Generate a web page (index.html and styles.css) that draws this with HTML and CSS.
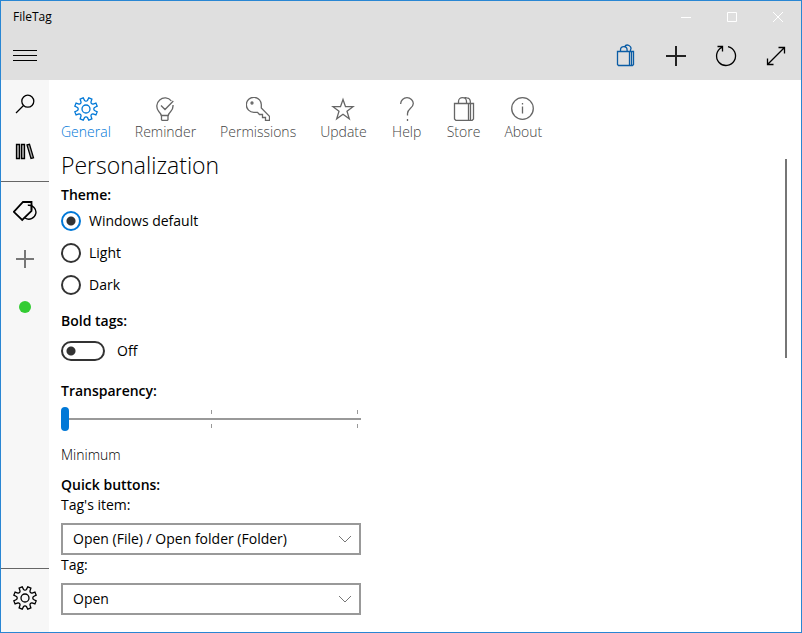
FILE: index.html
```html
<!DOCTYPE html>
<html lang="en">
<head>
<meta charset="utf-8">
<title>FileTag</title>
<link rel="stylesheet" href="styles.css">
</head>
<body>
<svg class="symbols" aria-hidden="true">
  <symbol id="gear" viewBox="0 0 24 24">
    <path d="M13.5 3.4 14.8.8 17.9 2.1 17 4.9A1.8 1.8 0 0 0 19.1 7L21.9 6.1 23.2 9.2 20.6 10.5A1.8 1.8 0 0 0 20.6 13.5L23.2 14.8 21.9 17.9 19.1 17A1.8 1.8 0 0 0 17 19.1L17.9 21.9 14.8 23.2 13.5 20.6A1.8 1.8 0 0 0 10.5 20.6L9.2 23.2 6.1 21.9 7 19.1A1.8 1.8 0 0 0 4.9 17L2.1 17.9.8 14.8 3.4 13.5A1.8 1.8 0 0 0 3.4 10.5L.8 9.2 2.1 6.1 4.9 7A1.8 1.8 0 0 0 7 4.9L6.1 2.1 9.2.8 10.5 3.4A1.8 1.8 0 0 0 13.5 3.4Z"/>
    <circle cx="12" cy="12" r="4"/>
  </symbol>
  <symbol id="bag" viewBox="0 0 24 24">
    <path d="M2.500 6.500H21.500V22L20 23.500H4L2.500 22ZM16.500 6.500V23.500M18.500 6.500V23M6.500 6.500V4.500A4 3.800 0 0 1 14.500 4.500V6.500M12 1A3 3 0 0 1 14.500 .8A4 3.800 0 0 1 18.300 4.500V6.500"/>
  </symbol>
</svg>
<div class="window">
  <header class="header">
    <div class="titlebar">
      <span class="title">FileTag</span>
      <div class="caption">
        <button type="button" aria-label="Minimize"><svg viewBox="0 0 12 12"><path d="M1 6.5H11"/></svg></button>
        <button type="button" aria-label="Maximize"><svg viewBox="0 0 12 12"><path d="M1.500 1.500H10.500V10.500H1.500Z"/></svg></button>
        <button type="button" aria-label="Close"><svg viewBox="0 0 12 12"><path d="M1 1 11 11M11 1 1 11"/></svg></button>
      </div>
    </div>
    <div class="toolbar">
      <button class="menu" type="button" aria-label="Menu"><svg viewBox="0 0 24 24"><path d="M0 6.500H24M0 11.500H24M0 16.500H24"/></svg></button>
      <div class="actions">
        <button class="store" type="button" aria-label="Store"><svg viewBox="0 0 24 24"><path d="M3.500 7.500H19.500V20.500L18.500 21.500H4.500L3.500 20.500ZM15.500 7.500V21.500M17.500 7.500V21M6.500 7.500V6A3.300 3.300 0 0 1 13.100 6V7.500M10.500 3A3.300 3.300 0 0 1 16.500 6V7.500"/></svg></button>
        <button class="strong" type="button" aria-label="Add"><svg viewBox="0 0 24 24"><path d="M2 12H22M12 2V22"/></svg></button>
        <button type="button" aria-label="Refresh"><svg viewBox="0 0 24 24"><path d="M14 2.700A9.500 9.500 0 1 1 8 3.400M3.500 2.500H8.500V7.500"/></svg></button>
        <button type="button" aria-label="Expand"><svg viewBox="0 0 24 24"><path d="M3.500 20.500 20.500 3.500M14.500 3.500H20.500V9.500M3.500 14.500V20.500H9.500"/></svg></button>
      </div>
    </div>
  </header>
  <div class="body">
    <nav class="rail">
      <div class="rail-group">
        <button type="button" aria-label="Search"><svg viewBox="0 0 24 24"><circle cx="14.800" cy="9.200" r="6"/><path d="M10.500 13.500 3 21"/></svg></button>
        <button type="button" aria-label="Library"><svg class="books" viewBox="0 0 24 24"><path d="M3.500 4.500H6.500V18.500H3.500ZM8.500 4.500H11.500V18.500H8.500ZM14 5 16.500 4.300 20.500 17.800 18 18.500Z"/></svg></button>
      </div>
      <div class="rail-group tags">
        <button type="button" aria-label="Tags"><svg class="tag-icon" viewBox="0 0 24 24"><path d="M.8 12.800 10 3H18.500V11.800L9.200 21Z"/><path class="thin" d="M14.800 6.300A7 7 0 1 1 12 19M18.500 5.500V11"/></svg></button>
        <button class="faint" type="button" aria-label="Add tag"><svg viewBox="0 0 24 24"><path d="M3 12H21M12 3V21"/></svg></button>
        <button type="button" aria-label="Green tag"><span class="dot"></span></button>
      </div>
      <div class="rail-group bottom">
        <button type="button" aria-label="Settings"><svg viewBox="0 0 24 24"><use href="#gear"/></svg></button>
      </div>
    </nav>
    <main class="main">
      <nav class="tabs">
        <a class="active" href="#general"><svg viewBox="0 0 24 24"><use href="#gear"/></svg>General</a>
        <a href="#reminder"><svg viewBox="0 0 24 24"><path d="M18.300 3.800A8.200 8.200 0 1 0 5.800 14.500C7.800 16.500 8.500 17.500 8.500 19.500V22.800L9.300 23.500H14.200L15 22.800V19.500C15 17.500 15.700 16.500 17.700 14.500A8.200 8.200 0 0 0 20 8M8.500 18.500H15M8 8.500 12 12.500 20.300 4"/></svg>Reminder</a>
        <a href="#permissions"><svg viewBox="0 0 24 24"><circle cx="6" cy="6" r="1"/><path d="M8 15.300A7.500 7.500 0 1 1 15.300 8.500V11L23.500 19.300V23.500H19.500V20.500H16.500V17.500H13.500L11.500 15.300Z"/></svg>Permissions</a>
        <a href="#update"><svg viewBox="0 0 24 24"><path d="M12 2.500 14.500 9.700H22L16 14.200 18.300 21.800 12 17.300 5.700 21.800 8 14.200 2 9.700H9.500Z"/></svg>Update</a>
        <a href="#help"><svg viewBox="0 0 24 24"><path d="M5.700 7V6.500A6.300 5.800 0 0 1 18.300 6.500C18.300 11 12.500 11.500 12.500 16.500V18.500M12.500 22V24"/></svg>Help</a>
        <a href="#store"><svg viewBox="0 0 24 24"><use href="#bag"/></svg>Store</a>
        <a href="#about"><svg viewBox="0 0 24 24"><circle cx="11.500" cy="11.500" r="10.800"/><path d="M11.500 9.500V16.500M11.500 6V7.500"/></svg>About</a>
      </nav>
      <div class="pane">
        <form class="settings">
          <h1>Personalization</h1>
          <fieldset>
            <legend>Theme:</legend>
            <label class="radio"><input type="radio" name="theme" checked>Windows default</label>
            <label class="radio"><input type="radio" name="theme">Light</label>
            <label class="radio"><input type="radio" name="theme">Dark</label>
          </fieldset>
          <h2 id="bold">Bold tags:</h2>
          <label class="toggle"><input type="checkbox" role="switch" aria-describedby="bold">Off</label>
          <label class="heading" for="transparency">Transparency:</label>
          <input class="slider" id="transparency" type="range" min="0" max="2" value="0">
          <output class="value" for="transparency">Minimum</output>
          <h2 class="quick">Quick buttons:</h2>
          <label for="item">Tag's item:</label>
          <div class="select"><select id="item"><option>Open (File) / Open folder (Folder)</option></select><svg viewBox="0 0 14 8"><path d="M1 1 7 7 13 1"/></svg></div>
          <label for="tag">Tag:</label>
          <div class="select"><select id="tag"><option>Open</option></select><svg viewBox="0 0 14 8"><path d="M1 1 7 7 13 1"/></svg></div>
        </form>
        <div class="scroll-track"><div class="scroll-thumb"></div></div>
      </div>
    </main>
  </div>
</div>
</body>
</html>
```
FILE: styles.css
```css
* { box-sizing: border-box; }

body {
  margin: 0;
  font: 14px/20px "Open Sans", "Noto Sans", sans-serif;
  color: #000;
  background: #fff;
}

button {
  display: flex;
  align-items: center;
  justify-content: center;
  padding: 0;
  border: 0;
  background: none;
  color: inherit;
}

svg {
  display: block;
  width: 24px;
  height: 24px;
  fill: none;
  stroke: currentColor;
  stroke-width: 1.3;
}

.symbols { display: none; }

.window {
  display: flex;
  flex-direction: column;
  min-height: 100vh;
  border: 1px solid #2986d3;
}

.header { background: #dfdfdf; }

.titlebar {
  display: flex;
  justify-content: space-between;
  height: 31px;
  padding-left: 12px;
}

.title { font-size: 12px; line-height: 32px; }

.caption { display: flex; color: #fff; }
.caption button { width: 46px; }
.caption svg { width: 12px; height: 12px; stroke-width: 1; }

.toolbar { display: flex; justify-content: space-between; height: 48px; }
.menu { width: 48px; }
.menu svg { stroke-width: 1; }
.actions { display: flex; }
.actions button { width: 50px; }
.actions .store { color: #0a5ca5; }
.actions .strong { color: #222; }
.strong svg { stroke-width: 2; }

.body { display: flex; flex: 1; }

.rail {
  display: flex;
  flex-direction: column;
  flex: none;
  width: 48px;
  background: #f7f7f7;
}
.rail button { width: 48px; height: 48px; }
.rail-group { padding-bottom: 5px; }
.tags { padding-top: 5px; border-top: 1px solid #666; }
.bottom { margin-top: auto; padding: 5px 0 10px; border-top: 1px solid #666; }
.books { fill: #aaa; }
.tag-icon { stroke-width: 1.8; }
.tag-icon .thin { stroke-width: 1.4; }
.faint { color: #777; }
.faint svg { stroke-width: 2; }
.dot { width: 12px; height: 12px; border-radius: 50%; background: #3c3; }

.main { display: flex; flex-direction: column; flex: 1; min-width: 0; }

.tabs { display: flex; gap: 24px; padding: 17px 12px 0; }
.tabs a {
  display: flex;
  flex-direction: column;
  align-items: center;
  min-width: 32px;
  font-weight: 300;
  color: #444;
  text-decoration: none;
}
.tabs svg { margin-bottom: 1px; color: #666; }
.tabs .active, .tabs .active svg { color: #0078d7; }

.pane { display: flex; flex: 1; }

.settings {
  display: flex;
  flex-direction: column;
  flex: 1;
  align-items: flex-start;
  padding: 8px 12px 17px;
}

h1 { margin: 0; font-size: 23px; line-height: 30px; font-weight: 300; }

fieldset { margin: 0; padding: 0; border: 0; }
legend, h2, .heading {
  margin: 0;
  padding: 0;
  font-size: 14px;
  line-height: 20px;
  font-weight: 600;
}
legend { padding-top: 5px; }

.radio { display: flex; align-items: center; gap: 8px; height: 32px; }
.radio input {
  appearance: none;
  width: 20px;
  height: 20px;
  margin: 0;
  border: 2px solid #333;
  border-radius: 50%;
}
.radio input:checked {
  border-color: #0078d7;
  background: radial-gradient(circle, #333 4px, transparent 5px);
}

fieldset + h2 { margin-top: 10px; }

.toggle { display: flex; align-items: center; gap: 12px; height: 40px; }
.toggle input {
  appearance: none;
  width: 44px;
  height: 20px;
  margin: 0;
  border: 2px solid #333;
  border-radius: 10px;
  background: radial-gradient(circle at 8px 8px, #333 4px, transparent 5px);
}

.heading { margin-top: 10px; }

.slider {
  appearance: none;
  width: 300px;
  max-width: 100%;
  height: 36px;
  margin: 0;
  background:
    linear-gradient(#999, #999) 0 17px / 100% 2px no-repeat,
    linear-gradient(#999 4px, transparent 4px 14px, #999 14px) 50% 9px / 1px 18px no-repeat,
    linear-gradient(#999 4px, transparent 4px 14px, #999 14px) calc(100% - 3px) 9px / 1px 18px no-repeat;
}
.slider::-webkit-slider-thumb {
  appearance: none;
  width: 8px;
  height: 24px;
  border-radius: 4px;
  background: #0078d7;
}

.value { margin-top: 8px; font-weight: 300; }
.quick { margin-top: 10px; }

.select { position: relative; width: 300px; max-width: 100%; margin: 8px 0 0; }
.select select {
  display: block;
  appearance: none;
  width: 100%;
  height: 32px;
  padding: 0 32px 0 10px;
  border: 2px solid #999;
  border-radius: 0;
  background: #fff;
  font: inherit;
  color: inherit;
}
.select svg {
  position: absolute;
  top: 12px;
  right: 9px;
  width: 14px;
  height: 8px;
  color: #777;
  stroke-width: 1;
  pointer-events: none;
}

.scroll-track { width: 2px; margin: 17px 14px 0 0; }
.scroll-thumb { height: 42%; background: #767676; }
```
